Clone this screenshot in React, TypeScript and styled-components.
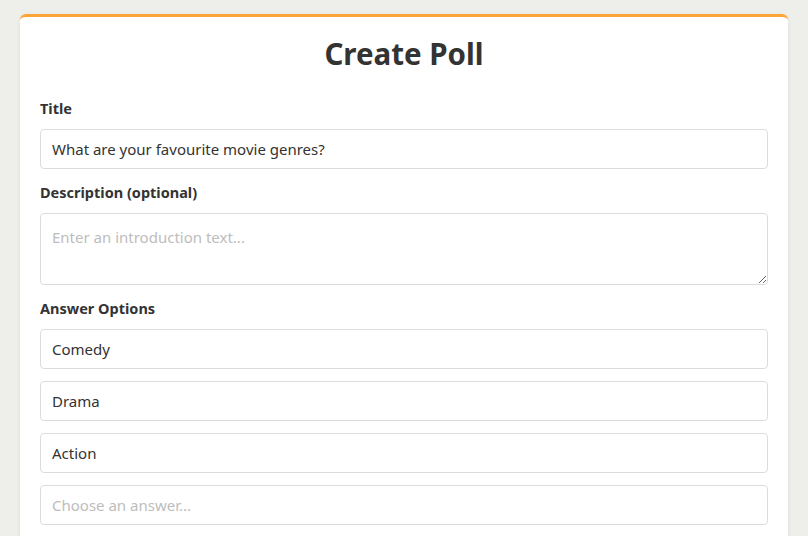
import styled, { createGlobalStyle } from "styled-components";

const GlobalStyle = createGlobalStyle`
  html, body {
    margin: 0;
    padding: 0;
    background: #eeeeea;
    font-family: "Noto Sans", "Open Sans", sans-serif;
    color: #333333;
  }
  * {
    box-sizing: border-box;
  }
`;

const Page = styled.div`
  padding: 14px 20px 0;
  height: 536px;
  overflow: hidden;
`;

const Card = styled.form`
  background: #ffffff;
  border-top: 3px solid #ffa436;
  border-radius: 6px;
  box-shadow: 0 1px 4px rgba(0, 0, 0, 0.08);
  padding: 15px 20px 40px;
`;

const Heading = styled.h1`
  margin: 0 0 22px;
  text-align: center;
  font-size: 29.5px;
  line-height: 44px;
  font-weight: 700;
  color: #333333;
`;

const Group = styled.div`
  display: flex;
  flex-direction: column;
  margin-bottom: 13px;
`;

const Label = styled.label`
  font-size: 14.5px;
  line-height: 20px;
  font-weight: 700;
  color: #333333;
  margin-bottom: 11px;
`;

const fieldStyles = `
  width: 100%;
  border: 1px solid #dcdcdc;
  border-radius: 4px;
  padding: 0 11px;
  font-family: "Noto Sans", "Open Sans", sans-serif;
  font-size: 15px;
  color: #333333;
  background: #ffffff;
  outline: none;
  &::placeholder {
    color: #bdbdbd;
  }
`;

const Input = styled.input`
  ${fieldStyles}
  height: 40px;
`;

const TextArea = styled.textarea`
  ${fieldStyles}
  height: 72px;
  padding-top: 13px;
  resize: vertical;
  display: block;
`;

const OptionList = styled.div`
  display: flex;
  flex-direction: column;
  gap: 12px;
`;

const options = ["Comedy", "Drama", "Action"];

export default function App() {
  return (
    <>
      <GlobalStyle />
      <Page>
        <Card onSubmit={(e) => e.preventDefault()}>
          <Heading>Create Poll</Heading>
          <Group>
            <Label>Title</Label>
            <Input defaultValue="What are your favourite movie genres?" />
          </Group>
          <Group>
            <Label>Description (optional)</Label>
            <TextArea placeholder="Enter an introduction text..." />
          </Group>
          <Group>
            <Label>Answer Options</Label>
            <OptionList>
              {options.map((opt) => (
                <Input key={opt} defaultValue={opt} />
              ))}
              <Input placeholder="Choose an answer..." />
            </OptionList>
          </Group>
        </Card>
      </Page>
    </>
  );
}
